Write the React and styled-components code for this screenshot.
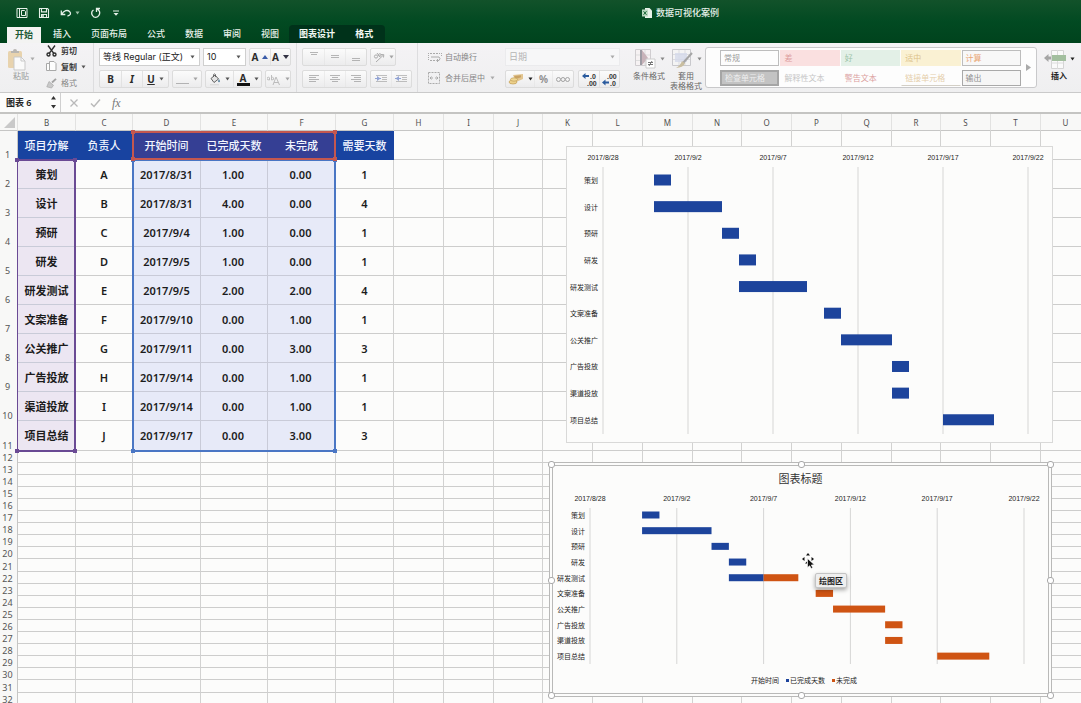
import React from "react";
import styled, { createGlobalStyle, css } from "styled-components";

const UI = `"Noto Sans", "Noto Sans CJK SC", sans-serif`;
const HELV = `"Liberation Sans", "Noto Sans CJK SC", sans-serif`;

const Global = createGlobalStyle`
  *, *::before, *::after { box-sizing: border-box; }
  body { margin: 0; background: #fbfbfa; font-family: ${UI}; }
  button, input, select { font: inherit; color: inherit; margin: 0; padding: 0; border: 0; background: none; border-radius: 0; outline: 0; }
  button { cursor: pointer; }
  svg { display: block; flex: none; }
`;

const Window = styled.div`
  display: flex;
  flex-direction: column;
  height: 100vh;
  overflow: hidden;
`;

/* ---------- title bar and tabs ---------- */
const Header = styled.header`
  flex: none;
  background: linear-gradient(#12522a, #024a22 50%, #00431d);
  color: #e6f0e8;
`;
const TitleRow = styled.div`
  display: flex;
  align-items: center;
  height: 25px;
  padding-left: 16px;
`;
const Quick = styled.div`
  display: flex;
  gap: 10px;
`;
const QuickButton = styled.button`
  display: flex;
  align-items: center;
  gap: 3px;
  height: 14px;
`;
const Title = styled.h1`
  flex: 1;
  display: flex;
  justify-content: center;
  align-items: center;
  gap: 4px;
  margin: 0;
  padding-left: 160px;
  font-size: 9px;
  line-height: 14px;
  font-weight: 500;
`;
const Tabs = styled.nav`
  display: flex;
  height: 18px;
  padding-left: 7px;
`;
const Tab = styled.button`
  padding: 0 10px;
  font-size: 9px;
  line-height: 18px;
  font-weight: 500;
  white-space: nowrap;
  ${(p) =>
    p.$active &&
    css`
      padding: 0 8px;
      margin: 2px 2px 0 0;
      line-height: 16px;
      font-weight: 700;
      color: #1c5a35;
      background: #f3f3f2;
    `}
`;
const ContextTabs = styled.div`
  display: flex;
  padding-right: 2px;
  background: #00321a;
  border-radius: 4px 4px 0 0;
  color: #f4faf5;
  & > button { font-weight: 700; }
`;

/* ---------- ribbon ---------- */
const Ribbon = styled.div`
  flex: none;
  display: flex;
  height: 50px;
  background: linear-gradient(#f4f3f5, #efeff0);
  border-bottom: 1px solid #cacaca;
  color: #4a4a4a;
  font-size: 8px;
  line-height: 10px;
`;
const Group = styled.div`
  display: flex;
  flex-direction: column;
  flex: none;
  gap: 4px;
  padding: 5px 5px 0;
  ${(p) => p.$rule && css`border-right: 1px solid #dddddf;`}
`;
const Line = styled.div`
  display: flex;
  gap: ${(p) => p.$gap || 3}px;
  height: 18px;
`;
const ClipGroup = styled.div`
  flex: none;
  display: flex;
  width: 94px;
  padding-left: 6px;
  border-right: 1px solid #dddddf;
`;
const BigButton = styled.button`
  flex: none;
  display: flex;
  flex-direction: column;
  align-items: center;
  align-self: flex-start;
  width: ${(p) => p.$width || 36}px;
  padding-top: 4px;
  line-height: 10px;
  white-space: nowrap;
  color: ${(p) => p.$color || "#666"};
`;
const IconRow = styled.span`
  display: flex;
  align-items: center;
  gap: 4px;
  height: 24px;
`;
const ClipList = styled.div`
  display: flex;
  flex-direction: column;
  padding-left: 10px;
`;
const TextButton = styled.button`
  display: flex;
  align-items: center;
  gap: ${(p) => p.$gap || 4}px;
  height: 16px;
  white-space: nowrap;
  font-weight: ${(p) => (p.$strong ? 700 : 400)};
  color: ${(p) => (p.$dim ? "#858585" : "#3a3a3a")};
`;
const Segment = styled.div`
  display: flex;
  height: 18px;
  border: 1px solid #dcdcdc;
  border-radius: 2px;
  background: linear-gradient(#fbfbfb, #ececed);
`;
const Tool = styled.button`
  display: flex;
  align-items: center;
  justify-content: center;
  gap: 4px;
  width: ${(p) => p.$width || 21}px;
  opacity: ${(p) => (p.$dim ? 0.5 : 1)};
  font-size: 10px;
  font-weight: 700;
  color: #2c2c2c;
  & + & { border-left: 1px solid #e2e2e2; }
`;
const InkLetter = styled.span`
  width: 13px;
  line-height: 10px;
  border-bottom: 3px solid #111;
`;
const SelectBox = styled.label`
  display: flex;
  align-items: center;
  width: ${(p) => p.$width}px;
  height: 18px;
  padding-right: 4px;
  border: 1px solid ${(p) => (p.$dim ? "#ebebed" : "#cfcfcf")};
  background: ${(p) => (p.$dim ? "#f7f7f8" : "#fff")};
  color: ${(p) => (p.$dim ? "#b4b4b4" : "#222")};
  font-family: Inter, "Noto Sans CJK SC", sans-serif;
  font-size: 9px;
`;
const Select = styled.select`
  appearance: none;
  flex: 1;
  min-width: 0;
  height: 16px;
  padding-left: 3px;
  opacity: 1;
`;
const WrapGroup = styled.div`
  flex: none;
  display: flex;
  flex-direction: column;
  gap: 5px;
  width: 82px;
  padding: 6px 0 0 10px;
`;
const FormatGroup = styled.div`
  flex: none;
  display: flex;
  gap: 1px;
  width: 80px;
  padding-left: 6px;
`;
const Gallery = styled.div`
  flex: 1;
  display: flex;
  align-items: center;
  min-width: 0;
  height: 41px;
  margin-top: 4px;
  padding-left: 14px;
  border: 1px solid #c9c9cb;
  border-radius: 3px;
  background: #fdfdfd;
`;
const GalleryGrid = styled.div`
  flex: 1;
  display: grid;
  grid-template-columns: repeat(5, 1fr);
  gap: 4px 1px;
`;
const StyleCell = styled.button`
  height: 16px;
  padding-left: 3px;
  overflow: hidden;
  text-align: left;
  line-height: 14px;
  white-space: nowrap;
  color: ${(p) => p.$color};
  background: ${(p) => p.$bg || "transparent"};
  border: 1px solid ${(p) => p.$border || "transparent"};
  ${(p) => p.$thick && css`border-width: 2px; line-height: 11px;`}
  ${(p) => p.$under && css`border-bottom-color: #d3cfc6;`}
`;
const GalleryNext = styled.button`
  width: 15px;
  display: flex;
  justify-content: center;
`;

/* ---------- formula bar ---------- */
const FormulaBar = styled.div`
  flex: none;
  display: flex;
  align-items: center;
  height: 21px;
  background: #fcfcfb;
  border-bottom: 2px solid #c4c4c2;
  font-size: 9px;
`;
const NameBox = styled.label`
  display: flex;
  align-items: center;
  width: 61px;
  height: 19px;
  padding: 0 4px 0 6px;
  border-right: 1px solid #d0d0d0;
  color: #222;
  font-weight: 600;
`;
const NameInput = styled.input`
  flex: 1;
  min-width: 0;
`;
const FormulaButtons = styled.div`
  display: flex;
  align-items: center;
  gap: 11px;
  padding: 0 10px 0 8px;
  color: #b9b9b9;
`;
const FxButton = styled.button`
  font-family: "Liberation Serif", serif;
  font-style: italic;
  font-size: 12px;
  line-height: 14px;
  color: #777;
`;
const FormulaInput = styled.input`
  flex: 1;
  height: 19px;
`;

/* ---------- sheet ---------- */
const Sheet = styled.main`
  position: relative;
  flex: 1;
  min-height: 0;
  overflow: hidden;
  background: #fcfcfb;
`;
const Grid = styled.table`
  width: calc(100% + 10px);
  table-layout: fixed;
  border-collapse: separate;
  border-spacing: 0;
  font-size: 11px;
  line-height: 11px;
`;
const ColHead = styled.th`
  height: 17px;
  padding: 0;
  font-size: 8px;
  font-weight: 400;
  color: #4f4f4f;
  background: #f8f8f7;
  border-right: 1px solid #e2e2e1;
  border-bottom: 1px solid #c6c6c5;
`;
const RowHead = styled.th`
  padding: 0 2px 0 0;
  height: ${(p) => p.$height}px;
  vertical-align: bottom;
  font-size: 9px;
  line-height: 11px;
  font-weight: 400;
  color: #555;
  background: #f8f8f7;
  border-right: 1px solid #c6c6c5;
`;
const fills = { head: "#1843a0", headSel: "#353f94", name: "#ece6f2", range: "#e7eaf8" };
const Cell = styled.td`
  padding: 0;
  text-align: center;
  font-weight: 600;
  color: #1c1c1c;
  background: ${(p) => fills[p.$fill] || "transparent"};
  border-right: 1px solid #d2d2d1;
  border-bottom: 1px solid #cdcdcc;
  white-space: nowrap;
  ${(p) => p.$numeric && css`padding-right: 2px;`}
  ${(p) =>
    (p.$fill === "head" || p.$fill === "headSel") &&
    css`
      color: #f3f6ff;
      font-weight: 500;
      border-color: ${fills[p.$fill]};
    `}
  ${(p) =>
    (p.$fill === "name" || p.$fill === "range") &&
    css`border-color: #c9cbd8;`}
`;
const Range = styled.div`
  position: absolute;
  left: ${(p) => p.$x}px;
  top: ${(p) => p.$y}px;
  width: ${(p) => p.$w}px;
  height: ${(p) => p.$h}px;
  border: 2px solid ${(p) => p.$color};
  ${(p) => p.$clipLeft && css`border-left-width: 1px;`}
  pointer-events: none;
`;
const Knob = styled.i`
  position: absolute;
  width: 4px;
  height: 4px;
  background: ${(p) => p.$color};
  ${(p) => (p.$at[0] === "t" ? "top: -3px;" : "bottom: -3px;")}
  ${(p) => (p.$at[1] === "l" ? "left: -3px;" : "right: -3px;")}
`;
const ChartFrame = styled.figure`
  position: absolute;
  left: ${(p) => p.$x}px;
  top: ${(p) => p.$y}px;
  margin: 0;
  background: #fcfcfb;
  border: 1px solid #d9d9d8;
  ${(p) =>
    p.$selected &&
    css`
      border: 4px double #b9b9b8;
      border-radius: 3px;
    `}
`;
const Grip = styled.i`
  position: absolute;
  width: 7px;
  height: 7px;
  margin: -3px;
  left: ${(p) => p.$left};
  top: ${(p) => p.$top};
  border: 1px solid #a9a9a9;
  border-radius: 3px;
  background: #fff;
`;
const GripLayer = styled.div`
  position: absolute;
  inset: -2px;
`;
const Pointer = styled.div`
  position: absolute;
  left: 802px;
  top: 439px;
`;
const Tip = styled.div`
  position: absolute;
  left: 815px;
  top: 459px;
  padding: 0 3px;
  border: 1px solid #c4c4c4;
  border-radius: 2px;
  background: #efefef;
  box-shadow: 0 2px 4px rgba(0, 0, 0, 0.35);
  color: #222;
  font-size: 8px;
  line-height: 13px;
  font-weight: 600;
`;

const Caret = ({ color = "#555" }) => (
  <svg width="5" height="4" viewBox="0 0 5 4"><path d="M.5.5h4L2.5 3.5z" fill={color} /></svg>
);

/* ---------- icons ---------- */
const PanelIcon = () => (
  <svg width="12" height="12" viewBox="0 0 12 12" fill="none" stroke="currentColor" strokeWidth="1">
    <path d="M1 1.5h10v9H1zM3.500 1.5v9M5.500 3.500h3l1 1v4h-4z" />
  </svg>
);
const SaveIcon = () => (
  <svg width="12" height="12" viewBox="0 0 12 12" fill="none" stroke="currentColor" strokeWidth="1.1">
    <path d="M1.5 1.5h8l1 1v8h-9zM3.5 1.5v3.4h5V1.5M3.5 10.5v-3h5v3" /><path d="M5 8v2" strokeWidth="1.5" />
  </svg>
);
const UndoIcon = () => (
  <svg width="12" height="12" viewBox="0 0 12 12" fill="none" stroke="currentColor" strokeWidth="1.3">
    <path d="M1.300 3.500v4h4M1.500 7.300C4 3.500 7.500 2.500 9.500 4.500s1 4-2 4.500" />
  </svg>
);
const RedoIcon = () => (
  <svg width="12" height="12" viewBox="0 0 12 12" fill="none" stroke="currentColor" strokeWidth="1.3">
    <path d="M10 1.500H6.500V5M6.800 1.800C9.500 3 10.500 5.500 9 8.300s-5 2.700-6.500.2S2 4 3.500 3" />
  </svg>
);
const MoreIcon = () => (
  <svg width="8" height="8" viewBox="0 0 8 8"><path d="M1 2h6" stroke="currentColor" /><path d="M1.500 4h5L4 6.800z" fill="currentColor" /></svg>
);
const FileIcon = () => (
  <svg width="10" height="12" viewBox="0 0 10 12">
    <path d="M3 1h4.500L10 3.500V11H3z" fill="#e9f2ea" /><path d="M0 2.500h6v7H0z" fill="#bcd8c2" />
    <path d="M1.500 4.200l3 3.600M4.500 4.200l-3 3.600" stroke="#1f6b3b" strokeWidth="1" />
  </svg>
);
const PasteIcon = () => (
  <svg width="19" height="23" viewBox="0 0 19 23">
    <rect x="1" y="3" width="14" height="17" rx="1.500" fill="#e8d3ae" /><path d="M4 5V3h2a2 2 0 0 1 4 0h2v2z" fill="#b9b6b1" />
    <path d="M7 9h7l4 4v9H7z" fill="#fafafa" stroke="#c9c9c9" /><path d="M14 9v4h4" fill="none" stroke="#c9c9c9" />
  </svg>
);
const CutIcon = () => (
  <svg width="11" height="12" viewBox="0 0 11 12" fill="none" stroke="#2e2e2e" strokeWidth="1.400">
    <path d="M2 .5l5.800 7.800M9 .5L3.200 8.300" /><circle cx="2.500" cy="9.500" r="1.500" /><circle cx="8.500" cy="9.500" r="1.500" />
  </svg>
);
const CopyIcon = () => (
  <svg width="11" height="12" viewBox="0 0 11 12" fill="#fdfdfd" stroke="#a8a8a8">
    <path d="M.5 2.500h5v7h-5z" /><path d="M3.500.5H8l2 2v7H3.500z" />
  </svg>
);
const BrushIcon = () => (
  <svg width="11" height="11" viewBox="0 0 11 11">
    <path d="M10 .8L6 4.500" stroke="#a2a2a2" strokeWidth="1.800" /><path d="M3 3.500l4.500 3.800-2 2.700L.8 8.800z" fill="#c9c9c9" stroke="#a9a9a9" strokeWidth=".7" />
  </svg>
);
const BucketIcon = () => (
  <svg width="12" height="13" viewBox="0 0 12 13">
    <path d="M2 5.500L6 2l3.500 4L5 9.500z" fill="#e4e4e4" stroke="#555" strokeWidth=".9" /><path d="M4.500 4V1.500q1.200-1.200 2 0V4" fill="none" stroke="#555" strokeWidth=".8" />
    <path d="M10 6q1.700 2.800 0 3.300-1.600-.5 0-3.300" fill="#4a7896" /><path d="M1 11.700h9" stroke="#ddd" strokeWidth="1.500" />
  </svg>
);
const Lines = ({ rows, y = 3 }) => (
  <svg width="12" height="12" viewBox="0 0 12 12" stroke="#777">
    {rows.map(([a, b], i) => <path key={i} d={`M${a} ${y + i * 2 + 0.500}H${b}`} />)}
  </svg>
);
const IndentIcon = ({ flip }) => (
  <svg width="13" height="12" viewBox="0 0 13 12">
    <path d="M1 2.500h11M7 4.500h5M7 6.500h5M1 8.500h11" stroke="#888" />
    <path d={flip ? "M2 3l3.500 2.500L2 8z" : "M4 3L.5 5.500 4 8z"} fill="#3558b8" /><path d="M0 5.500h6" stroke="#3558b8" />
  </svg>
);
const OrientIcon = () => (
  <svg width="12" height="12" viewBox="0 0 12 12" fill="none" stroke="#666">
    <path d="M3 11l7.500-7M8 3.500l2.800.2-.3 2.800" /><circle cx="3" cy="5.500" r="1.600" /><path d="M4 2l3 4" /><circle cx="6.800" cy="4" r="1.300" />
  </svg>
);
const WrapIcon = () => (
  <svg width="14" height="10" viewBox="0 0 14 10" fill="none" stroke="#aaa">
    <path d="M.5 1v8M13.500 1v3" strokeDasharray="1 1" /><path d="M2 1.500h10M2 8.500h5" strokeDasharray="2 1" /><path d="M3 5h8q2 1.500 0 3.500H9M10 7L8.500 8.500 10 10" />
  </svg>
);
const MergeIcon = () => (
  <svg width="12" height="12" viewBox="0 0 12 12" fill="none" stroke="#aaa">
    <path d="M.5.500h11v11H.5z" strokeDasharray="2 1" /><path d="M2 6h3M10 6H7M3.500 4.500L2 6l1.500 1.500M8.500 4.500L10 6 8.500 7.500" />
  </svg>
);
const CoinsIcon = () => (
  <svg width="16" height="12" viewBox="0 0 16 12">
    <path d="M5 2l10-1v5L8 9z" fill="#e2c692" /><path d="M6 3l7-.8v2L8 6z" fill="#b98b45" opacity=".6" />
    <ellipse cx="5" cy="9" rx="4" ry="2" fill="#ecd08a" stroke="#c09d58" strokeWidth=".7" /><ellipse cx="6" cy="6.500" rx="3.500" ry="1.700" fill="#efd794" stroke="#c09d58" strokeWidth=".7" />
  </svg>
);
const DecimalIcon = ({ less }) => (
  <svg width="15" height="13" viewBox="0 0 15 13" fontFamily="Liberation Sans" fontWeight="700" fontSize="7" fill="#333">
    <text x={less ? 5 : 8} y="6">{less ? ".00" : ".0"}</text><text x={less ? 8 : 5} y="12.500">{less ? ".0" : ".00"}</text>
    <path transform={less ? "translate(0 6.500)" : undefined} d="M0 3l3.500-3v2H7v2H3.500v2z" fill="#2a5b9e" />
  </svg>
);
const CondIcon = () => (
  <svg width="22" height="20" viewBox="0 0 22 20">
    <path d="M1.500.500h15v16h-15z" fill="#f6f2f3" stroke="#d0cdd0" /><path d="M2 6h14M2 11.500h14M11 1v15" stroke="#ddd" />
    <path d="M6 1h2l6 8-6 7H6z" fill="#c8b3b9" /><path d="M6 1h2v15H6z" fill="#9e9ca4" />
    <path d="M12 10h9v9h-9z" fill="#fff" stroke="#ccc" /><path d="M14 13.500h5M14 15.500h5M18 12l-3 5" stroke="#777" />
  </svg>
);
const TableStyleIcon = () => (
  <svg width="22" height="20" viewBox="0 0 22 20">
    <path d="M1.500.500h18v16h-18z" fill="#f4f4f4" stroke="#c9c9cd" /><path d="M2 5.500h17M2 10.500h17M8 1v15M14 1v15" stroke="#dcdce0" />
    <path d="M4 4h12v9H4z" fill="#d5daea" opacity=".8" /><path d="M21 4l-9 10" stroke="#a5a5a5" strokeWidth="2" /><path d="M11 12l3 2.500q-2 4-9 4.500 4-2 6-7z" fill="#c9bea0" />
  </svg>
);
const InsertIcon = () => (
  <svg width="22" height="19" viewBox="0 0 22 19">
    <path d="M7.500.500h12v18h-12z" fill="#fafafa" stroke="#d4d4d4" /><path d="M7.500 13h12M13.500 0v19" stroke="#dcdcdc" />
    <path d="M8 5h14v6H8z" fill="#a3bf9f" /><path d="M0 8l4.500-4v2.500H7v3H4.500V12z" fill="#a5a5a5" />
  </svg>
);
const StepIcon = () => (
  <svg width="5" height="13" viewBox="0 0 5 13" fill="#333"><path d="M2.500 0L5 3.500H0zM2.500 12.500L0 9h5z" /></svg>
);
const CrossIcon = () => (
  <svg width="10" height="10" viewBox="0 0 10 10" stroke="currentColor" strokeWidth="1.300"><path d="M1.500 1.500l7 7M8.500 1.500l-7 7" /></svg>
);
const CheckIcon = () => (
  <svg width="11" height="10" viewBox="0 0 11 10" fill="none" stroke="currentColor" strokeWidth="1.500"><path d="M1 5.500l3 3 6-7" /></svg>
);
const ClearIcon = () => (
  <svg width="15" height="13" viewBox="0 0 15 13" fill="none" stroke="#888">
    <path d="M1 5q2-2 2.500 0v2q-3 0-2-1.500M5.500 2v5q3 0 2.200-2-1-1.500-2.200 0M7 12l3-8 3.500 8M8 9.500h4.500" />
  </svg>
);

/* ---------- data ---------- */
const tasks = [
  { name: "策划", owner: "A", start: "2017/8/31", day: 3, done: 1, left: 0 },
  { name: "设计", owner: "B", start: "2017/8/31", day: 3, done: 4, left: 0 },
  { name: "预研", owner: "C", start: "2017/9/4", day: 7, done: 1, left: 0 },
  { name: "研发", owner: "D", start: "2017/9/5", day: 8, done: 1, left: 0 },
  { name: "研发测试", owner: "E", start: "2017/9/5", day: 8, done: 2, left: 2 },
  { name: "文案准备", owner: "F", start: "2017/9/10", day: 13, done: 0, left: 1 },
  { name: "公关推广", owner: "G", start: "2017/9/11", day: 14, done: 0, left: 3 },
  { name: "广告投放", owner: "H", start: "2017/9/14", day: 17, done: 0, left: 1 },
  { name: "渠道投放", owner: "I", start: "2017/9/14", day: 17, done: 0, left: 1 },
  { name: "项目总结", owner: "J", start: "2017/9/17", day: 20, done: 0, left: 3 },
];
const ticks = ["2017/8/28", "2017/9/2", "2017/9/7", "2017/9/12", "2017/9/17", "2017/9/22"];
const letters = "BCDEFGHIJKLMNOPQRSTU".split("");
const widths = [58, 57, 68, 67, 68, 58, 50, 50, 49, 50, 50, 50, 49, 50, 50, 50, 49, 50, 50];
const extraLetters = letters.slice(6);
const blankRows = Array.from({ length: 21 }, (_, i) => i + 12);
const heads = ["项目分解", "负责人", "开始时间", "已完成天数", "未完成", "需要天数"];

const styleCells = [
  ["常规", { $color: "#9b9b9b", $border: "#bdbdbd" }],
  ["差", { $color: "#dc9c9c", $bg: "#fae0e0" }],
  ["好", { $color: "#9cc4a8", $bg: "#e3f0e7" }],
  ["适中", { $color: "#dcc189", $bg: "#faf1d3" }],
  ["计算", { $color: "#e9a878", $border: "#bdbdbd", $bg: "#f8f8f8" }],
  ["检查单元格", { $color: "#eeeeee", $border: "#a5a5a5", $bg: "#c3c3c3", $thick: true }],
  ["解释性文本", { $color: "#c6c6c6" }],
  ["警告文本", { $color: "#dba0a0" }],
  ["链接单元格", { $color: "#e5cfac", $under: true }],
  ["输出", { $color: "#8f8f8f", $border: "#a9a9a9", $bg: "#f6f6f6" }],
];

function Gantt({ width, height, axisX, dayWidth, labelY, top, bottom, firstRow, pitch, bar, split, title, legend }) {
  return (
    <svg width={width} height={height} viewBox={`0 0 ${width} ${height}`} fontFamily={HELV} fontSize="7" fill="#1c1c1c">
      {title && <text x={width / 2} y="17" textAnchor="middle" fontSize="11" fill="#333">{title}</text>}
      {ticks.map((t, i) => {
        const x = axisX + i * 5 * dayWidth;
        return (
          <g key={t}>
            <text x={x} y={labelY} textAnchor="middle">{t}</text>
            <path d={`M${x} ${top}V${bottom}`} stroke="#d6d6d5" />
          </g>
        );
      })}
      {tasks.map((t, i) => {
        const y = firstRow + i * pitch;
        const x = axisX + t.day * dayWidth;
        const blue = split ? t.done : t.done + t.left;
        return (
          <g key={t.name}>
            <text x={axisX - 5} y={y + 3} textAnchor="end">{t.name}</text>
            {blue > 0 && <rect x={x} y={y - bar / 2} width={blue * dayWidth} height={bar} fill="#1d449c" />}
            {split && t.left > 0 && (
              <rect x={x + blue * dayWidth} y={y - bar / 2} width={t.left * dayWidth} height={bar} fill="#cf5413" />
            )}
          </g>
        );
      })}
      {legend && (
        <g>
          <text x="198" y={height - 10}>开始时间</text>
          <rect x="233" y={height - 14} width="3" height="3" fill="#1d449c" />
          <text x="237" y={height - 10}>已完成天数</text>
          <rect x="279" y={height - 14} width="3" height="3" fill="#cf5413" />
          <text x="283" y={height - 10}>未完成</text>
        </g>
      )}
    </svg>
  );
}

function Selection({ color, x, y, w, h, clipLeft }) {
  return (
    <Range $color={color} $x={x} $y={y} $w={w} $h={h} $clipLeft={clipLeft}>
      {["tl", "tr", "bl", "br"].map((at) => <Knob key={at} $at={at} $color={color} />)}
    </Range>
  );
}

export default function App() {
  return (
    <Window>
      <Global />
      <Header>
        <TitleRow>
          <Quick>
            <QuickButton aria-label="文件"><PanelIcon /></QuickButton>
            <QuickButton aria-label="保存"><SaveIcon /></QuickButton>
            <QuickButton aria-label="撤销"><UndoIcon /><Caret color="#9fc2a9" /></QuickButton>
            <QuickButton aria-label="恢复"><RedoIcon /></QuickButton>
            <QuickButton aria-label="更多"><MoreIcon /></QuickButton>
          </Quick>
          <Title><FileIcon />数据可视化案例</Title>
        </TitleRow>
        <Tabs>
          <Tab $active>开始</Tab>
          {["插入", "页面布局", "公式", "数据", "审阅", "视图"].map((t) => <Tab key={t}>{t}</Tab>)}
          <ContextTabs>
            <Tab>图表设计</Tab>
            <Tab>格式</Tab>
          </ContextTabs>
        </Tabs>
      </Header>

      <Ribbon>
        <ClipGroup>
          <BigButton $width={30} $color="#999">
            <IconRow><PasteIcon /><Caret color="#aaa" /></IconRow>
            粘贴
          </BigButton>
          <ClipList>
            <TextButton $strong><CutIcon />剪切</TextButton>
            <TextButton $strong><CopyIcon />复制<Caret /></TextButton>
            <TextButton $dim><BrushIcon />格式</TextButton>
          </ClipList>
        </ClipGroup>

        <Group $rule>
          <Line>
            <SelectBox $width={101}>
              <Select aria-label="字体"><option>等线 Regular (正文)</option></Select><Caret />
            </SelectBox>
            <SelectBox $width={43}>
              <Select aria-label="字号"><option>10</option></Select><Caret />
            </SelectBox>
            <Segment>
              <Tool $width={20}>A<svg width="6" height="4" viewBox="0 0 6 4"><path d="M0 4l3-4 3 4z" fill="#3a5ba8" /></svg></Tool>
              <Tool $width={20}>A<svg width="6" height="4" viewBox="0 0 6 4"><path d="M0 0l3 4 3-4z" fill="#334" /></svg></Tool>
            </Segment>
          </Line>
          <Line>
            <Segment>
              <Tool>B</Tool>
              <Tool><em>I</em></Tool>
              <Tool $width={26}><u>U</u><Caret /></Tool>
            </Segment>
            <Segment>
              <Tool $dim $width={28}><svg width="13" height="10" viewBox="0 0 13 10"><path d="M0 9.500h13" stroke="#777" /></svg><Caret /></Tool>
            </Segment>
            <Segment>
              <Tool $width={27}><BucketIcon /><Caret /></Tool>
              <Tool $width={28}><InkLetter>A</InkLetter><Caret /></Tool>
            </Segment>
            <Segment>
              <Tool $dim $width={24}><ClearIcon /><Caret /></Tool>
            </Segment>
          </Line>
        </Group>

        <Group $rule>
          <Line>
            <Segment>
              <Tool $dim><Lines y={1} rows={[[2, 10], [3, 9]]} /></Tool>
              <Tool $dim><Lines y={4} rows={[[2, 10], [2, 10]]} /></Tool>
              <Tool $dim><Lines y={7} rows={[[2, 10], [2, 10]]} /></Tool>
            </Segment>
            <Segment><Tool $dim $width={24}><OrientIcon /><Caret /></Tool></Segment>
          </Line>
          <Line>
            <Segment>
              <Tool $dim><Lines y={2} rows={[[1, 11], [1, 8], [1, 11], [1, 8]]} /></Tool>
              <Tool $dim><Lines y={2} rows={[[1, 11], [3, 9], [1, 11], [3, 9]]} /></Tool>
              <Tool $dim><Lines y={2} rows={[[1, 11], [4, 11], [1, 11], [4, 11]]} /></Tool>
            </Segment>
            <Segment>
              <Tool $dim $width={20}><IndentIcon flip /></Tool>
              <Tool $dim $width={20}><IndentIcon /></Tool>
            </Segment>
          </Line>
        </Group>

        <WrapGroup>
          <TextButton $dim $gap={3}><WrapIcon />自动换行</TextButton>
          <TextButton $dim $gap={5}><MergeIcon />合并后居中<Caret color="#aaa" /></TextButton>
        </WrapGroup>

        <Group>
          <Line>
            <SelectBox $width={115} $dim>
              <Select aria-label="数字格式"><option>日期</option></Select><Caret color="#aaa" />
            </SelectBox>
          </Line>
          <Line $gap={4}>
            <Segment>
              <Tool $width={28}><CoinsIcon /><Caret color="#222" /></Tool>
              <Tool $dim $width={18}>%</Tool>
              <Tool $dim $width={21}>
                <svg width="14" height="7" viewBox="0 0 14 7" fill="none" stroke="#555"><circle cx="2.500" cy="3.500" r="2" /><circle cx="7" cy="3.500" r="2" /><circle cx="11.500" cy="3.500" r="2" /></svg>
              </Tool>
            </Segment>
            <Segment>
              <Tool $width={20}><DecimalIcon /></Tool>
              <Tool $width={20}><DecimalIcon less /></Tool>
            </Segment>
          </Line>
        </Group>

        <FormatGroup>
          <BigButton><IconRow><CondIcon /><Caret color="#888" /></IconRow>条件格式</BigButton>
          <BigButton><IconRow><TableStyleIcon /><Caret color="#888" /></IconRow>套用<br />表格格式</BigButton>
        </FormatGroup>

        <Gallery>
          <GalleryGrid>
            {styleCells.map(([label, look]) => <StyleCell key={label} {...look}>{label}</StyleCell>)}
          </GalleryGrid>
          <GalleryNext aria-label="更多样式">
            <svg width="5" height="7" viewBox="0 0 5 7"><path d="M0 0l5 3.500L0 7z" fill="#aaa" /></svg>
          </GalleryNext>
        </Gallery>

        <BigButton $width={44} $color="#222">
          <IconRow><InsertIcon /><Caret color="#222" /></IconRow>
          <b>插入</b>
        </BigButton>
      </Ribbon>

      <FormulaBar>
        <NameBox><NameInput aria-label="名称框" defaultValue="图表 6" /><StepIcon /></NameBox>
        <FormulaButtons>
          <button aria-label="取消"><CrossIcon /></button>
          <button aria-label="输入"><CheckIcon /></button>
          <FxButton>fx</FxButton>
        </FormulaButtons>
        <FormulaInput aria-label="编辑栏" />
      </FormulaBar>

      <Sheet>
        <Grid>
          <colgroup>
            <col width="18" />
            {widths.map((w, i) => <col key={i} width={w} />)}
            <col />
          </colgroup>
          <thead>
            <tr>
              <ColHead aria-label="全选">
                <svg width="16" height="14" viewBox="0 0 16 14"><path d="M15 2v11H4z" fill="#c9c9c9" /></svg>
              </ColHead>
              {letters.map((l) => <ColHead key={l} scope="col">{l}</ColHead>)}
            </tr>
          </thead>
          <tbody>
            <tr>
              <RowHead scope="row" $height={29}>1</RowHead>
              {heads.map((h, i) => <Cell key={h} $fill={i > 1 && i < 5 ? "headSel" : "head"}>{h}</Cell>)}
              {extraLetters.map((l) => <Cell key={l} />)}
            </tr>
            {tasks.map((t, i) => (
              <tr key={t.name}>
                <RowHead scope="row" $height={i === 9 ? 30 : 29}>{i + 2}</RowHead>
                <Cell $fill="name">{t.name}</Cell>
                <Cell>{t.owner}</Cell>
                <Cell $fill="range">{t.start}</Cell>
                <Cell $fill="range" $numeric>{t.done.toFixed(2)}</Cell>
                <Cell $fill="range" $numeric>{t.left.toFixed(2)}</Cell>
                <Cell>{t.done + t.left}</Cell>
                {extraLetters.map((l) => <Cell key={l} />)}
              </tr>
            ))}
            {blankRows.map((n) => (
              <tr key={n}>
                <RowHead scope="row" $height={n % 10 === 1 ? 13 : 12}>{n}</RowHead>
                {letters.map((l) => <Cell key={l} />)}
              </tr>
            ))}
          </tbody>
        </Grid>

        <Selection color="#6a4a94" x={17} y={45} w={59} h={293} clipLeft />
        <Selection color="#4a76c4" x={132} y={45} w={204} h={293} />
        <Selection color="#c4574f" x={132} y={17} w={204} h={29} />

        <ChartFrame $x={566} $y={32}>
          <Gantt width={485} height={295} axisX={36} dayWidth={17} labelY={13} top={20} bottom={287}
            firstRow={33} pitch={26.64} bar={11} />
        </ChartFrame>

        <ChartFrame $x={549} $y={348} $selected>
          <Gantt width={495} height={227} axisX={37} dayWidth={17.36} labelY={35} top={42} bottom={198}
            firstRow={49} pitch={15.68} bar={7} split title="图表标题" legend />
          <GripLayer>
            {["0%", "50%", "100%"].flatMap((left) =>
              ["0%", "50%", "100%"].map((top) =>
                left === "50%" && top === "50%" ? null : <Grip key={left + top} $left={left} $top={top} />
              )
            )}
          </GripLayer>
        </ChartFrame>

        <Pointer>
          <svg width="14" height="16" viewBox="0 0 14 16" fill="#111">
            <path d="M6 0l2 2.500H4zM0 6l2.500-2v4zM12 6L9.500 4v4zM3 10.500L5 8.500v2z" />
            <path d="M5.500 5.500v9l2.200-1.800 1.500 2.800 1.500-.8-1.400-2.700 3-.3z" stroke="#fff" strokeWidth=".6" />
          </svg>
        </Pointer>
        <Tip role="tooltip">绘图区</Tip>
      </Sheet>
    </Window>
  );
}
